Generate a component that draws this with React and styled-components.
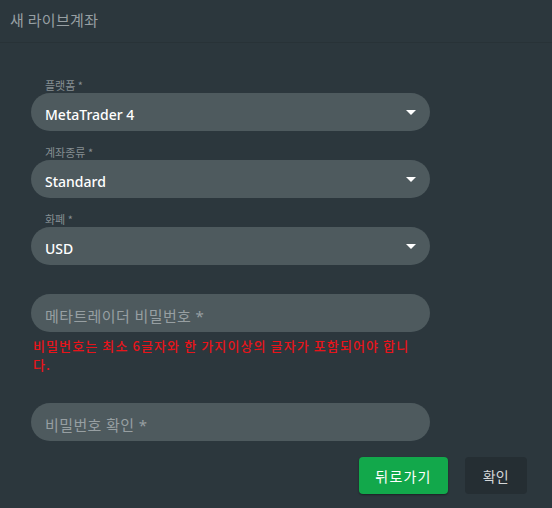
import React from "react";
import styled, { createGlobalStyle } from "styled-components";

const Global = createGlobalStyle`
  html, body { margin: 0; padding: 0; background: #2c373d; }
  body { font-family: "Noto Sans", "Noto Sans CJK KR", sans-serif; }
  * { box-sizing: border-box; }
`;

const Page = styled.div`
  width: 552px;
  height: 508px;
  background: #2c373d;
  display: flex;
  flex-direction: column;
  overflow: hidden;
`;

const Header = styled.div`
  height: 43px;
  flex: none;
  display: flex;
  align-items: center;
  padding: 0 10px 4px;
  border-bottom: 1px solid #283237;
  color: #979fa3;
  font-size: 15px;
  letter-spacing: 0.3px;
  font-family: "Noto Sans CJK KR", sans-serif;
`;

const Form = styled.div`
  padding: 36px 0 0 31px;
  display: flex;
  flex-direction: column;
  gap: 15px;
  width: 430px;
`;

const Group = styled.div`
  display: flex;
  flex-direction: column;
`;

const Label = styled.div`
  height: 14px;
  font-size: 11px;
  line-height: 12px;
  padding-left: 14px;
  color: #858e92;
  font-family: "Noto Sans CJK KR", sans-serif;
`;

const Field = styled.div`
  height: 38px;
  width: 399px;
  border-radius: 19px;
  background: #4e5a5e;
  display: flex;
  align-items: center;
  justify-content: space-between;
  padding: 4px 14px 0 14px;
  color: ${(p) => (p.$placeholder ? "#979fa2" : "#ffffff")};
  font-size: ${(p) => (p.$placeholder ? "15px" : "14px")};
  letter-spacing: ${(p) => (p.$placeholder ? "0.4px" : "0")};
  font-weight: ${(p) => (p.$placeholder ? 400 : 500)};
  font-family: "Noto Sans", "Noto Sans CJK KR", sans-serif;
`;

const Arrow = styled.span`
  width: 0;
  height: 0;
  border-left: 5px solid transparent;
  border-right: 5px solid transparent;
  border-top: 5px solid #ffffff;
  margin-top: -4px;
`;

const Error = styled.div`
  width: 392px;
  margin: 4px 0 0 2px;
  font-size: 13px;
  line-height: 19px;
  letter-spacing: 1.1px;
  color: #e8141a;
  font-weight: 500;
  font-family: "Noto Sans CJK KR", sans-serif;
`;

const Actions = styled.div`
  display: flex;
  justify-content: flex-end;
  gap: 17px;
  padding: 16px 25px 0 0;
`;

const Button = styled.button`
  height: 37px;
  padding: 0 ${(p) => (p.$primary ? "16px" : "18px")};
  border: none;
  border-radius: 4px;
  background: ${(p) => (p.$primary ? "#12a84b" : "#252e33")};
  color: ${(p) => (p.$primary ? "#ffffff" : "#d4d8da")};
  font-size: 14px;
  letter-spacing: ${(p) => (p.$primary ? "1.2px" : "0.3px")};
  font-family: "Noto Sans CJK KR", sans-serif;
  box-shadow: ${(p) => (p.$primary ? "0 1px 2px rgba(0,0,0,0.4)" : "none")};
`;

const SelectField = ({ label, value }) => (
  <Group>
    <Label>{label}</Label>
    <Field>
      <span>{value}</span>
      <Arrow />
    </Field>
  </Group>
);

export default function App() {
  return (
    <Page>
      <Global />
      <Header>새 라이브계좌</Header>
      <Form>
        <SelectField label="플랫폼 *" value="MetaTrader 4" />
        <SelectField label="계좌종류 *" value="Standard" />
        <SelectField label="화폐 *" value="USD" />
        <Group>
          <Label />
          <Field $placeholder>메타트레이더 비밀번호 *</Field>
          <Error>비밀번호는 최소 6글자와 한 가지이상의 글자가 포함되어야 합니다.</Error>
        </Group>
        <Group>
          <Label />
          <Field $placeholder>비밀번호 확인 *</Field>
        </Group>
      </Form>
      <Actions>
        <Button $primary>뒤로가기</Button>
        <Button>확인</Button>
      </Actions>
    </Page>
  );
}
